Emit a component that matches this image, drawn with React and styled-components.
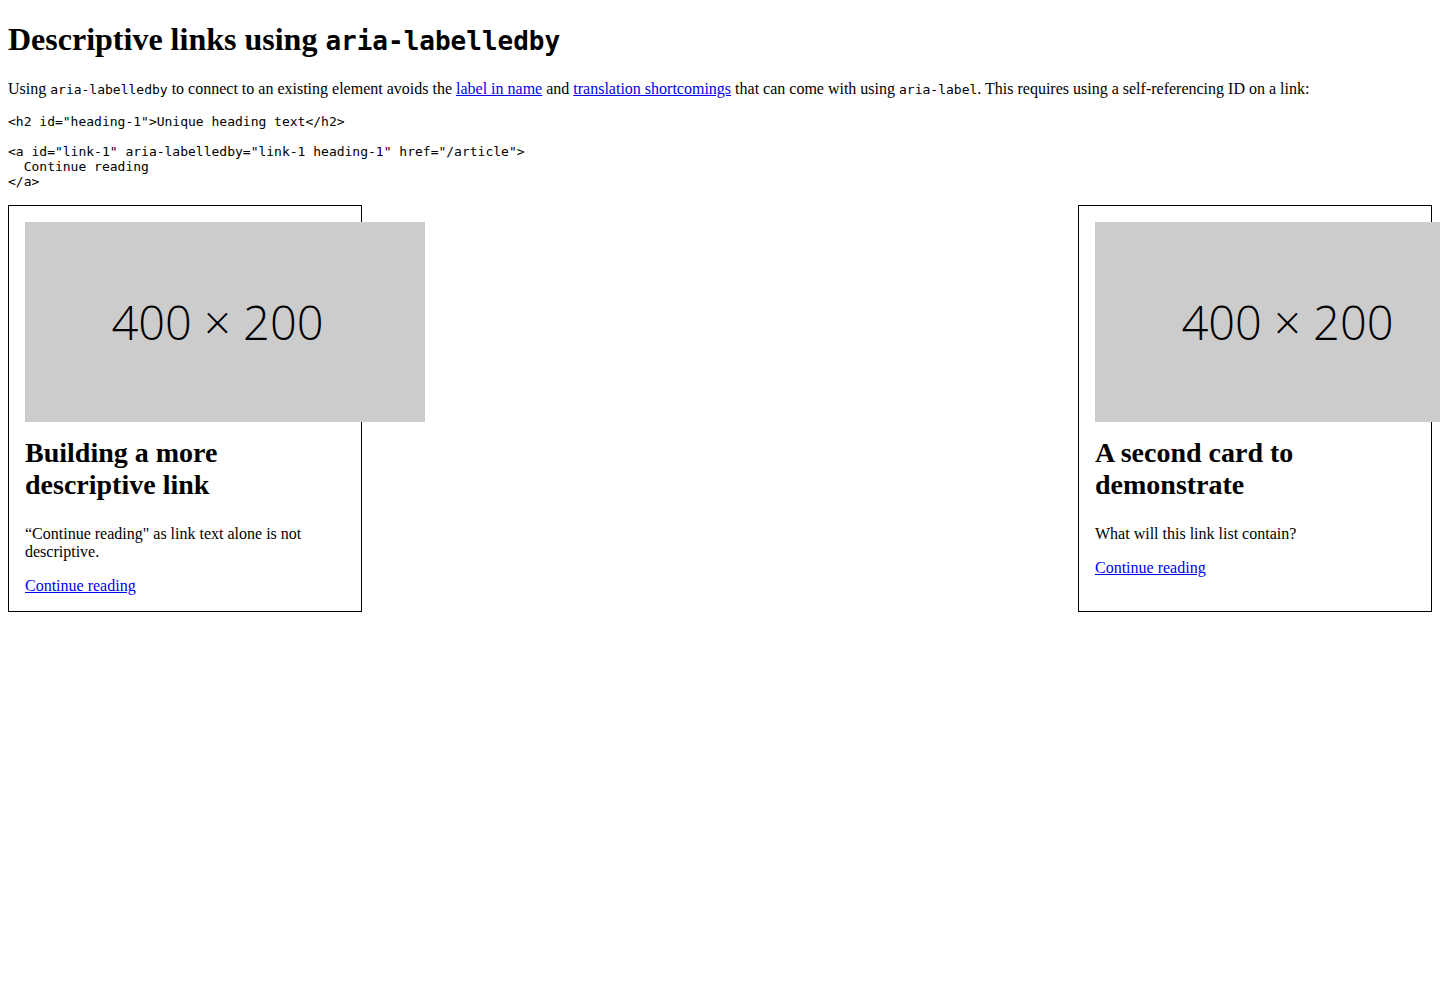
import React from "react";
import styled, { createGlobalStyle } from "styled-components";

const Global = createGlobalStyle`
  body {
    margin: 0;
    font-family: "Liberation Serif", "Times New Roman", serif;
    font-size: 16px;
    color: #000;
    background: #fff;
  }
`;

const Page = styled.div`
  padding: 0 8px 8px;
`;

const Title = styled.h1`
  font-size: 32px;
  font-weight: bold;
  margin: 21.44px 0;
`;

const Code = styled.code`
  font-family: "DejaVu Sans Mono", monospace;
  font-size: ${(p) => (p.$big ? "26px" : "13px")};
`;

const Para = styled.p`
  margin: 16px 0;
`;

const Link = styled.a`
  color: #0000ee;
  text-decoration: underline;
`;

const Pre = styled.pre`
  font-family: "DejaVu Sans Mono", monospace;
  font-size: 13px;
  margin: 13px 0;
`;

const CardRow = styled.div`
  display: flex;
  justify-content: space-between;
  align-items: stretch;
  margin-top: 16px;
`;

const Card = styled.article`
  width: 320px;
  border: 1px solid #000;
  padding: 16px;
  display: flex;
  flex-direction: column;
  align-items: flex-start;
`;

const Placeholder = styled.div`
  flex: none;
  width: 400px;
  min-width: 400px;
  height: 200px;
  background: #cccccc;
  display: flex;
  align-items: center;
  justify-content: center;
  padding-right: 15px;
  box-sizing: border-box;
  font-family: "Open Sans", sans-serif;
  font-weight: 300;
  font-size: 47px;
  color: #000;
  white-space: nowrap;
`;

const CardTitle = styled.h2`
  font-size: 28px;
  font-weight: bold;
  margin: 15px 0 24px;
`;

const CardText = styled.p`
  margin: 0 0 16px;
`;

export default function App() {
  return (
    <Page>
      <Global />
      <Title>
        Descriptive links using <Code $big>aria-labelledby</Code>
      </Title>
      <Para>
        Using <Code>aria-labelledby</Code> to connect to an existing element avoids the{" "}
        <Link href="#">label in name</Link> and <Link href="#">translation shortcomings</Link>{" "}
        that can come with using <Code>aria-label</Code>. This requires using a self-referencing ID on a link:
      </Para>
      <Pre>{`<h2 id="heading-1">Unique heading text</h2>

<a id="link-1" aria-labelledby="link-1 heading-1" href="/article">
  Continue reading
</a>`}</Pre>
      <CardRow>
        <Card>
          <Placeholder>400 × 200</Placeholder>
          <CardTitle>Building a more descriptive link</CardTitle>
          <CardText>“Continue reading" as link text alone is not descriptive.</CardText>
          <Link href="#">Continue reading</Link>
        </Card>
        <Card>
          <Placeholder>400 × 200</Placeholder>
          <CardTitle>A second card to demonstrate</CardTitle>
          <CardText>What will this link list contain?</CardText>
          <Link href="#">Continue reading</Link>
        </Card>
      </CardRow>
    </Page>
  );
}
